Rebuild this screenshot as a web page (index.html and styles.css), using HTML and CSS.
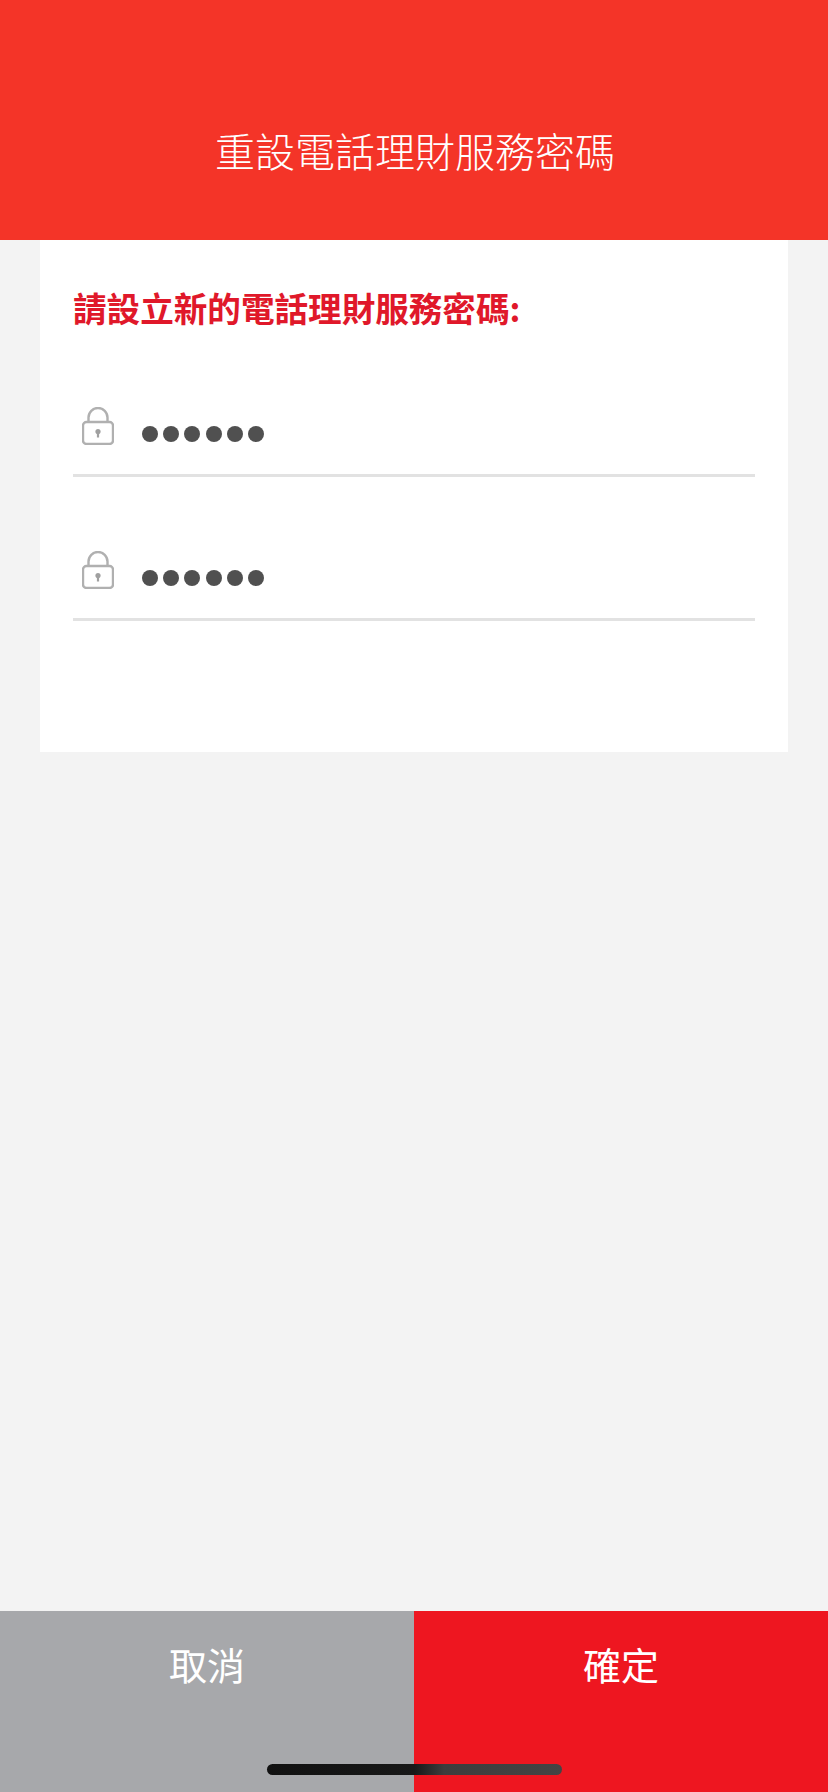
FILE: index.html
```html
<!DOCTYPE html>
<html lang="zh-Hant">
<head>
<meta charset="utf-8">
<title>重設電話理財服務密碼</title>
<link rel="stylesheet" href="styles.css">
</head>
<body>
<div class="screen">
  <header class="header"><h1 class="header-title">重設電話理財服務密碼</h1></header>
  <main class="main">
    <section class="card">
      <h2 class="card-title">請設立新的電話理財服務密碼:</h2>
      <div class="field">
        <svg class="lock" viewBox="0 0 32 38" aria-hidden="true"><path class="lock-line" d="M6.5 15V10.5a9.5 9.5 0 0 1 19 0V15"/><rect class="lock-line" x="1" y="15" width="30" height="22" rx="3.5"/><circle class="lock-fill" cx="16" cy="24.5" r="2.6"/><rect class="lock-fill" x="14.9" y="24.5" width="2.2" height="6"/></svg>
        <div class="dots"><span class="dot"></span><span class="dot"></span><span class="dot"></span><span class="dot"></span><span class="dot"></span><span class="dot"></span></div>
      </div>
      <div class="field">
        <svg class="lock" viewBox="0 0 32 38" aria-hidden="true"><path class="lock-line" d="M6.5 15V10.5a9.5 9.5 0 0 1 19 0V15"/><rect class="lock-line" x="1" y="15" width="30" height="22" rx="3.5"/><circle class="lock-fill" cx="16" cy="24.5" r="2.6"/><rect class="lock-fill" x="14.9" y="24.5" width="2.2" height="6"/></svg>
        <div class="dots"><span class="dot"></span><span class="dot"></span><span class="dot"></span><span class="dot"></span><span class="dot"></span><span class="dot"></span></div>
      </div>
    </section>
  </main>
  <footer class="footer">
    <button class="btn btn-cancel">取消</button>
    <button class="btn btn-ok">確定</button>
  </footer>
  <div class="home-indicator"></div>
</div>
</body>
</html>
```
FILE: styles.css
```css
* { box-sizing: border-box; }
html, body { margin: 0; padding: 0; }
body { font-family: "Noto Sans CJK TC", "Liberation Sans", sans-serif; background: #f3f3f3; }
.screen { position: relative; width: 828px; height: 1792px; display: flex; flex-direction: column; overflow: hidden; }
.header { height: 240px; background: #f43428; display: flex; justify-content: center; padding: 120px 0 0 2px; }
.header-title { margin: 0; font-size: 40px; line-height: 60px; font-weight: 300; color: #fff; }
.main { flex: 1; padding: 0 40px; }
.card { height: 512px; background: #fff; padding: 43px 33px 0; }
.card-title { margin: 0; font-size: 33.6px; line-height: 50px; font-weight: 700; color: #e0182a; }
.field { height: 144px; display: flex; align-items: flex-end; gap: 28px; padding: 0 0 29px 9px; border-bottom: 3px solid #e2e2e2; }
.lock { width: 32px; height: 38px; flex: none; }
.lock-line { fill: none; stroke: #b0b0b0; stroke-width: 2.4; }
.lock-fill { fill: #a0a0a0; }
.dots { display: flex; gap: 5.2px; margin-bottom: 3px; }
.dot { width: 16px; height: 16px; border-radius: 50%; background: #505050; }
.footer { height: 181px; display: flex; }
.btn { flex: 1; border: 0; padding: 25px 0 0; font: inherit; font-size: 38px; line-height: 56px; color: #fff; display: flex; justify-content: center; align-items: flex-start; }
.btn-cancel { background: #a7a8ab; }
.btn-ok { background: #ee1620; }
.home-indicator { position: absolute; left: 267px; top: 1764px; width: 295px; height: 11px; border-radius: 6px; background: linear-gradient(90deg, #111 0%, #181818 50%, #3d3d3d 60%, #444 100%); }
```
